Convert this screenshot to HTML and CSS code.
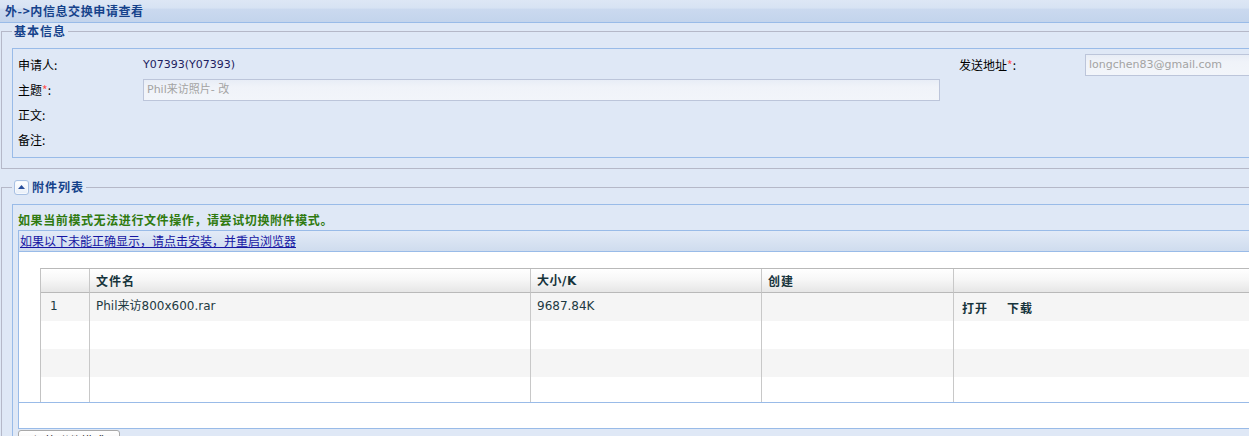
FILE: index.html
```html
<!DOCTYPE html>
<html lang="zh-CN">
<head>
<meta charset="utf-8">
<title>外->内信息交换申请查看</title>
<link rel="stylesheet" href="styles.css">
</head>
<body>
<div class="page">
  <div class="titlebar">外-&gt;内信息交换申请查看</div>

  <fieldset class="fs">
    <legend class="fs-legend">基本信息</legend>
    <div class="panel panel-basic">
      <div class="form">
        <div class="col-left">
          <div class="row"><span class="label">申请人:</span><span class="value">Y07393(Y07393)</span></div>
          <div class="row"><span class="label">主题<em>*</em>:</span><div class="input wide">Phil来访照片- 改</div></div>
          <div class="row"><span class="label">正文:</span></div>
          <div class="row"><span class="label">备注:</span></div>
        </div>
        <div class="col-right">
          <div class="row"><span class="label label-r">发送地址<em>*</em>:</span><div class="input addr">longchen83@gmail.com</div></div>
        </div>
      </div>
    </div>
  </fieldset>

  <fieldset class="fs fs-attach">
    <legend class="fs-legend">
      <span class="toggle"><svg width="7" height="4" viewBox="0 0 7 4"><path d="M0 4 L3.5 0 L7 4 Z" fill="#2a4f9c"/></svg></span><span>附件列表</span>
    </legend>
    <div class="panel panel-attach">
      <div class="notice">如果当前模式无法进行文件操作，请尝试切换附件模式。</div>
      <div class="box">
        <div class="linkbar"><a href="#" class="install">如果以下未能正确显示，请点击安装，并重启浏览器</a></div>
        <div class="gridarea">
          <table class="grid">
            <thead>
              <tr>
                <th class="c1"></th>
                <th class="c2">文件名</th>
                <th class="c3">大小/K</th>
                <th class="c4">创建</th>
                <th class="c5"></th>
              </tr>
            </thead>
            <tbody>
              <tr class="alt">
                <td class="num">1</td>
                <td>Phil来访800x600.rar</td>
                <td>9687.84K</td>
                <td></td>
                <td class="actions"><span>打开</span><span>下载</span></td>
              </tr>
              <tr><td></td><td></td><td></td><td></td><td></td></tr>
              <tr class="alt"><td></td><td></td><td></td><td></td><td></td></tr>
              <tr><td></td><td></td><td></td><td></td><td></td></tr>
            </tbody>
          </table>
        </div>
        <div class="boxfoot"></div>
      </div>
      <button class="switch" type="button">切换附件模式</button>
    </div>
  </fieldset>
</div>
</body>
</html>
```

FILE: styles.css
```css
html, body {
  margin: 0;
  padding: 0;
  overflow: hidden;
  background: #dfe8f6;
}

body {
  font-family: "DejaVu Sans", "Noto Sans CJK SC", sans-serif;
  font-size: 11px;
  color: #000;
}

.page {
  width: 1320px;
}

.titlebar {
  box-sizing: border-box;
  height: 23px;
  line-height: 22px;
  border-bottom: 1px solid #99bbe8;
  background: linear-gradient(#dde7f5 0, #d7e3f3 36%, #cad9ef 42%, #c3d4ec 100%);
  padding-left: 5px;
  font-family: "Noto Sans CJK SC", sans-serif;
  font-weight: bold;
  font-size: 12px;
  letter-spacing: 0.6px;
  color: #15428b;
}

.fs {
  margin: 0 0 0 1px;
  border: 1px solid #b5b8c8;
  border-right: none;
  padding: 9px 0 10px 10px;
  min-width: 0;
}

.fs-attach {
  margin-top: 10px;
  padding-bottom: 0;
  border-bottom: none;
}

.fs-legend {
  padding: 0 2px;
  height: 16px;
  line-height: 16px;
  font-family: "Noto Sans CJK SC", sans-serif;
  font-weight: bold;
  font-size: 12px;
  letter-spacing: 1px;
  color: #15428b;
  display: flex;
  align-items: center;
}

.toggle {
  box-sizing: border-box;
  width: 15px;
  height: 15px;
  border: 1px solid #a9c1e3;
  border-radius: 3px;
  background: linear-gradient(#ffffff, #e8eff9);
  display: flex;
  align-items: center;
  justify-content: center;
  margin-right: 3px;
  box-shadow: inset 0 0 0 1px #f6f9fd;
}

.toggle svg {
  display: block;
  margin-top: -1px;
}

.panel {
  border: 1px solid #99bbe8;
  border-right: none;
  background: #dfe8f6;
}

.panel-basic {
  padding: 3px 0 5px 5px;
}

.form {
  display: flex;
}

.col-left {
  width: 941px;
}

.row {
  display: flex;
  align-items: center;
  height: 25px;
}

.label {
  width: 125px;
  flex: none;
  font-family: "Noto Sans CJK SC", sans-serif;
  font-size: 12px;
  line-height: 16px;
  color: #000;
}

.label-r {
  width: 126px;
}

.label em {
  font-style: normal;
  color: #ff5050;
}

.value {
  font-size: 11px;
  color: #1c2160;
}

.input {
  box-sizing: border-box;
  height: 22px;
  border: 1px solid #bcc5da;
  background: linear-gradient(#e8edf6 0, #f0f3f9 35%, #f2f5fa 100%);
  color: #a3a3a3;
  font-size: 11px;
  line-height: 20px;
  padding: 0 3px;
  white-space: nowrap;
  overflow: hidden;
}

.input.wide {
  width: 797px;
}

.input.addr {
  width: 220px;
}

.panel-attach {
  padding: 0 0 0 5px;
  border-bottom: none;
}

.notice {
  padding: 7px 0 2px 0;
  line-height: 16px;
  font-family: "Noto Sans CJK SC", sans-serif;
  font-weight: bold;
  font-size: 12px;
  letter-spacing: 0.6px;
  color: #2f7a0f;
}

.box {
  border: 1px solid #99bbe8;
  border-right: none;
  background: #fff;
}

.linkbar {
  height: 20px;
  line-height: 20px;
  border-bottom: 1px solid #99bbe8;
  background: linear-gradient(#e2eaf7, #cfdcee);
  padding-left: 1px;
}

.install {
  font-family: "Noto Sans CJK SC", sans-serif;
  font-size: 12px;
  color: #1616a3;
  text-decoration: underline;
}

.gridarea {
  height: 151px;
  overflow: hidden;
  border-bottom: 1px solid #99bbe8;
  padding: 16px 0 0 21px;
  box-sizing: border-box;
}

.grid {
  border-collapse: separate;
  border-spacing: 0;
  table-layout: fixed;
  width: 1300px;
  border-top: 1px solid #b9b9b9;
  border-left: 1px solid #c3c3c3;
  font-size: 12px;
  color: #1e3a42;
}

.grid th,
.grid td {
  box-sizing: border-box;
  border-right: 1px solid #c8c8c8;
  padding: 0 0 0 6px;
  text-align: left;
  vertical-align: top;
  white-space: nowrap;
}

.grid th {
  height: 24px;
  border-bottom: 1px solid #b9b9b9;
  background: linear-gradient(#ffffff 0, #f7f7f7 45%, #e6e6e6 100%);
  font-family: "Noto Sans CJK SC", sans-serif;
  font-weight: bold;
  letter-spacing: 1px;
  padding-top: 4px;
  line-height: 16px;
  color: #17343c;
}

.grid th.c3 {
  font-family: "DejaVu Sans", "Noto Sans CJK SC", sans-serif;
  letter-spacing: 0.5px;
}

.grid .c1 { width: 49px; }
.grid .c2 { width: 441px; }
.grid .c3 { width: 231px; }
.grid .c4 { width: 192px; }
.grid .c5 { width: 387px; }

.grid td {
  height: 28px;
  padding-top: 5px;
  line-height: 16px;
}

.grid tr.alt td {
  background: #f5f5f5;
}

.grid td.num {
  padding-left: 9px;
}

.grid td.actions {
  padding-left: 8px;
  padding-top: 7px;
  font-family: "Noto Sans CJK SC", sans-serif;
  font-weight: bold;
  letter-spacing: 1px;
  color: #17343c;
}

.grid td.actions span + span {
  margin-left: 19px;
}

.boxfoot {
  height: 25px;
  background: #fff;
}

.switch {
  display: block;
  margin: 1px 0 0 0;
  width: 102px;
  height: 22px;
  padding: 0;
  border: 1px solid #a9a9a9;
  border-radius: 3px 3px 0 0;
  background: linear-gradient(#ffffff, #ececec);
  font-family: "Noto Sans CJK SC", sans-serif;
  font-size: 12px;
  line-height: 20px;
  color: #222;
}
```
